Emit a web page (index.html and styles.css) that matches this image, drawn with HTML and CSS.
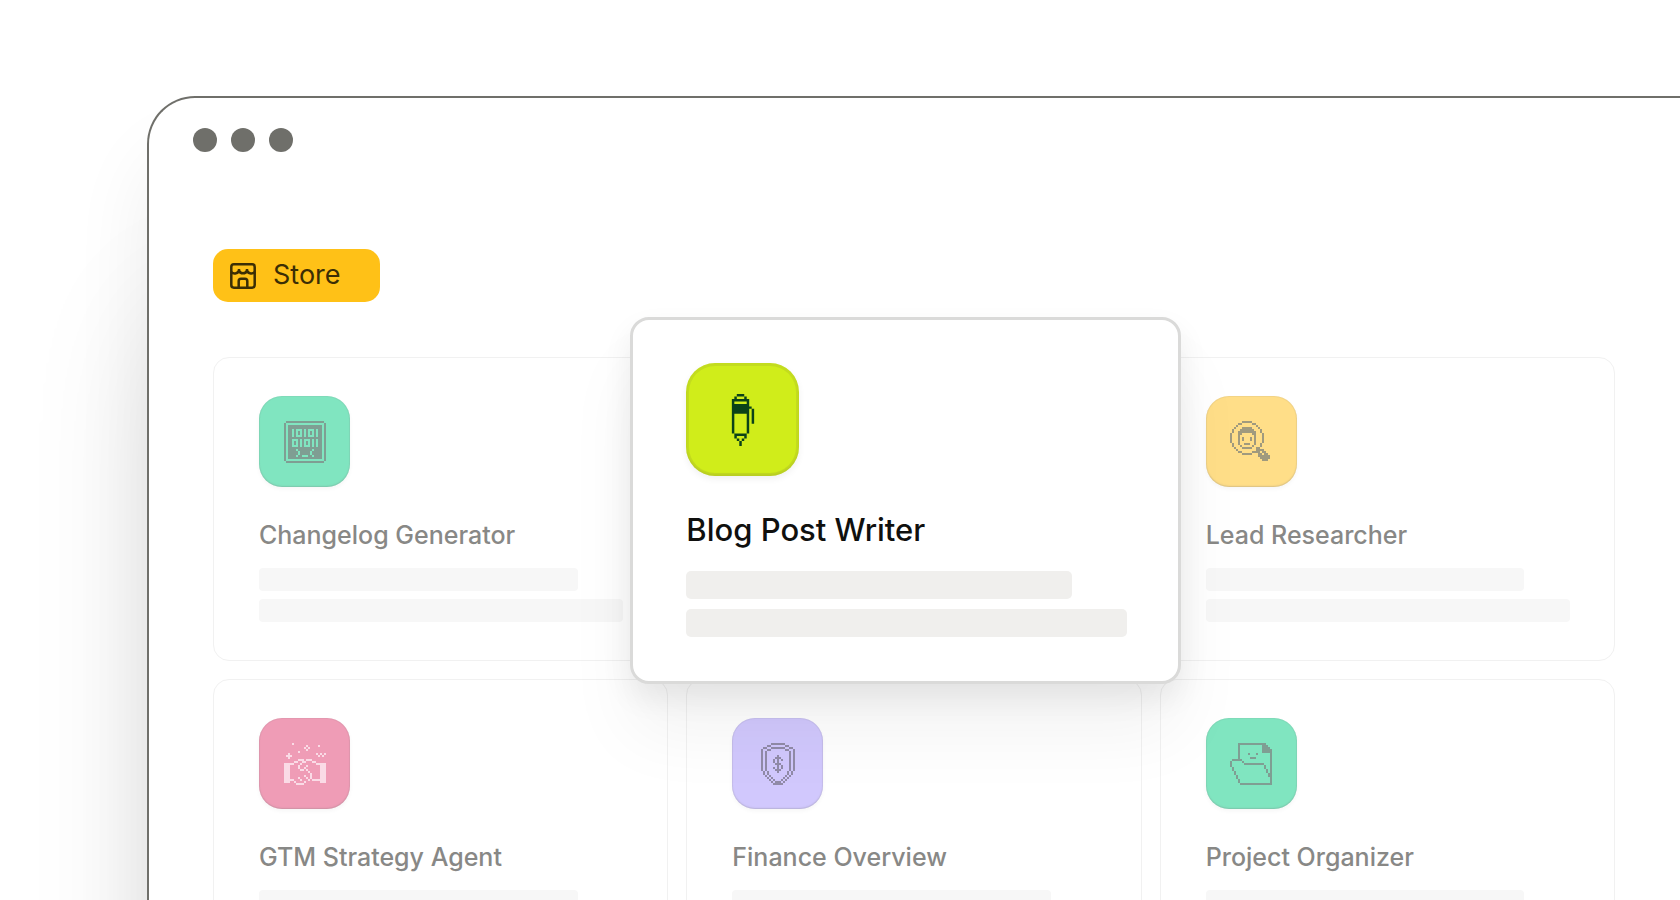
FILE: index.html
```
<!DOCTYPE html>
<html lang="en">
<head>
    <meta charset="UTF-8">
    <meta name="viewport" content="width=device-width, initial-scale=1.0">
    <title>Store</title>
    <link rel="stylesheet" href="styles.css">
</head>
<body>
    <main class="window">
        <div class="dots">
            <span class="dot"></span>
            <span class="dot"></span>
            <span class="dot"></span>
        </div>
        <div class="content">
            <button class="store-button" type="button">
                <svg class="store-icon" viewBox="0 0 26 26" fill="none" stroke="currentColor" stroke-width="2.5" stroke-linejoin="round">
                    <rect x="1.3" y="1.3" width="23.4" height="23.4" rx="2.6"/>
                    <path d="M1.3 9c2 2.200 6 2.200 7.700-1.500 1.500 3.800 6.500 3.800 8 0 1.700 3.700 5.700 3.700 7.700 1.500M9 6v4.500M17 6v4.500M8.700 24.500v-6.500q0-2.300 2.300-2.300h4q2.300 0 2.300 2.300v6.500"/>
                </svg>
                <span>Store</span>
            </button>
            <div class="grid">
                <article class="card">
                    <div class="tile green"><svg class="icon" data-icon="code"></svg></div>
                    <h2 class="name">Changelog Generator</h2>
                    <div class="bar short"></div>
                    <div class="bar"></div>
                </article>
                <div class="slot">
                    <article class="card featured">
                        <div class="tile lime"><svg class="icon" data-icon="pen"></svg></div>
                        <h2 class="name">Blog Post Writer</h2>
                        <div class="bar short"></div>
                        <div class="bar"></div>
                    </article>
                </div>
                <article class="card">
                    <div class="tile yellow"><svg class="icon" data-icon="search"></svg></div>
                    <h2 class="name">Lead Researcher</h2>
                    <div class="bar short"></div>
                    <div class="bar"></div>
                </article>
                <article class="card">
                    <div class="tile pink"><svg class="icon" data-icon="handshake"></svg></div>
                    <h2 class="name">GTM Strategy Agent</h2>
                    <div class="bar short"></div>
                    <div class="bar"></div>
                </article>
                <article class="card">
                    <div class="tile purple"><svg class="icon" data-icon="shield"></svg></div>
                    <h2 class="name">Finance Overview</h2>
                    <div class="bar short"></div>
                    <div class="bar"></div>
                </article>
                <article class="card">
                    <div class="tile green"><svg class="icon" data-icon="folder"></svg></div>
                    <h2 class="name">Project Organizer</h2>
                    <div class="bar short"></div>
                    <div class="bar"></div>
                </article>
            </div>
        </div>
    </main>
    <script src="icons.js"></script>
</body>
</html>
```
FILE: styles.css
```
* {
    box-sizing: border-box;
}
body {
    margin: 0;
    height: 100vh;
    overflow: hidden;
    background: #fff;
    font-family: Inter, "Liberation Sans", sans-serif;
}
.window {
    margin: 96px 0 0 147px;
    padding: 30px 0 200px;
    border: 2px solid #6f6f6a;
    border-right: 0;
    border-radius: 48px 0 0 0;
    background: #fff;
    box-shadow: 0 200px 140px -20px rgba(0, 0, 0, 0.14), 0 60px 80px rgba(0, 0, 0, 0.07);
}
.dots {
    display: flex;
    gap: 14px;
    padding-left: 44px;
}
.dot {
    width: 24px;
    height: 24px;
    border-radius: 50%;
    background: #6f6f6a;
}
.content {
    padding: 97px 65px 0 64px;
}
.store-button {
    display: flex;
    align-items: center;
    gap: 17px;
    width: 167px;
    height: 53px;
    padding: 0 17px;
    border: 0;
    border-radius: 15px;
    background: #ffc117;
    color: #3b2e05;
    font: 400 27px/32px Inter, "Liberation Sans", sans-serif;
    cursor: pointer;
}
.store-button span {
    padding-bottom: 2px;
}
.store-icon {
    width: 26px;
    height: 26px;
}
.grid {
    display: grid;
    grid-template-columns: repeat(3, 1fr);
    gap: 18px;
    margin-top: 55px;
}
.slot {
    position: relative;
}
.card {
    height: 304px;
    padding: 38px 44px 0 45px;
    border: 1px solid #f1f1f1;
    border-radius: 16px;
}
.tile {
    display: grid;
    place-items: center;
    width: 91px;
    height: 91px;
    border-radius: 23px;
    box-shadow: inset 0 0 0 1px rgba(120, 120, 120, 0.08), inset 0 -1px 2px rgba(120, 120, 120, 0.2), 0 2px 4px rgba(0, 0, 0, 0.04);
}
.icon {
    width: 42px;
    height: 42px;
    fill: currentColor;
}
.green {
    background: #80e5c0;
    color: #7f9e93;
}
.yellow {
    background: #ffde88;
    color: #a09a7e;
}
.pink {
    background: #ef9cb6;
    color: #fadbe6;
}
.purple {
    background: #d1c8fd;
    color: #918ba8;
}
.name {
    margin: 32px 0 17px;
    color: #888886;
    font-size: 25px;
    font-weight: 500;
    line-height: 32px;
    white-space: nowrap;
}
.bar {
    height: 23px;
    margin-bottom: 8px;
    border-radius: 4px;
    background: #f7f7f7;
}
.short {
    width: 87.5%;
}
/* card lifted out of its slot */
.featured {
    position: absolute;
    top: -40px;
    left: -56px;
    z-index: 1;
    width: calc(100% + 95px);
    height: 367px;
    padding: 43px 51px 0 53px;
    border: 3px solid #dadad9;
    border-radius: 19px;
    background: #fff;
    box-shadow: 0 50px 70px rgba(0, 0, 0, 0.05), 0 14px 30px rgba(0, 0, 0, 0.07);
}
.featured .tile {
    width: 113px;
    height: 113px;
    border-radius: 29px;
    box-shadow: inset 0 0 0 3px rgba(120, 120, 60, 0.14), inset 0 -2px 2px rgba(120, 120, 60, 0.15), 0 3px 7px rgba(0, 0, 0, 0.06);
}
.featured .icon {
    width: 52px;
    height: 52px;
}
.lime {
    background: #d0ed1a;
    color: #0b4218;
}
.featured .name {
    margin: 34px 0 21px;
    color: #10100e;
    font-size: 31px;
    line-height: 40px;
}
.featured .bar {
    height: 28px;
    margin-bottom: 10px;
    border-radius: 5px;
    background: #f0efed;
}
```
FILE: icons.js
```
// Pixel icons, one character per pixel on a 21 x 21 grid
const ICONS = {
    code: [
        ".###################.",
        "#...................#",
        "#.#################.#",
        "#.#################.#",
        "#.##.#...#.#...#.##.#",
        "#.##.#.#.#.#.#.#.##.#",
        "#.##.#.#.#.#.#.#.##.#",
        "#.##.#...#.#...#.##.#",
        "#.#################.#",
        "#.##...#.#...#.#.##.#",
        "#.##.#.#.#.#.#.#.##.#",
        "#.##.#.#.#.#.#.#.##.#",
        "#.##...#.#...#.#.##.#",
        "#.#################.#",
        "#.####.#######.####.#",
        "#.#####.#####.#####.#",
        "#.#####.#####.#####.#",
        "#.####.##...##.####.#",
        "#.#################.#",
        "#...................#",
        ".###################.",
    ],
    pen: [
        "........###....",
        ".......#...#...",
        "......#######..",
        "......#.....#..",
        "......#######..",
        "......########.",
        "......#######.#",
        "......#######.#",
        "......#.....#.#",
        "......#.....#.#",
        "......#.....#.#",
        "......#.....#.#",
        "......#.....#..",
        "......#.....#..",
        "......#.....#..",
        "......#.....#..",
        ".......#####...",
        ".......#...#...",
        "........#.#....",
        ".........#.....",
        ".........#.....",
    ],
    search: [
        "......#####.........",
        "....##.....##.......",
        "...#.........#......",
        "..#...#####...#.....",
        ".#...#######...#....",
        ".#..#########..#....",
        "#...##.....##...#...",
        "#...#.......#...#...",
        "#...#.#...#.#...#...",
        "#...#.#...#.#...#...",
        "#...#.......#...#...",
        ".#..#..###..#..#....",
        ".#...#.....#...#....",
        "..#...#####..##.....",
        "...#.........####...",
        "....##.....####.##..",
        "......#####...##.##.",
        "..............######",
        "...............#####",
        "................###.",
    ],
    handshake: [
        "....#................",
        "...........#.....#...",
        "..........#.#........",
        "...........#.........",
        ".......#.............",
        "..#.............#.#.#",
        ".###.............#.#.",
        "..#..................",
        ".......###.###.......",
        ".....##..##...##.....",
        "#####...#.......#####",
        "###....#...#......###",
        "###....#..#.......###",
        "###.....##.#......###",
        "###.........#.....###",
        "###..........#....###",
        "###.......#..#....###",
        "###....#...#.#....###",
        "#####...#...#.#######",
        "###..#....#.......###",
        "......####...........",
    ],
    shield: [
        ".......#######.....",
        ".....##.......##...",
        "...##..#######..##.",
        "..#..##.......##..#",
        "..#.#...........#.#",
        "..#.#...........#.#",
        "..#.#.....#.....#.#",
        "..#.#....###....#.#",
        "..#.#...#.#.#...#.#",
        "..#.#...#.#.....#.#",
        "..#.#....###....#.#",
        "..#.#.....#.#...#.#",
        "..#.#...#.#.#...#.#",
        "..#.#....###....#.#",
        "...#.#....#....#.#.",
        "...#.#.........#.#.",
        "....#.#.......#.#..",
        ".....#.#.....#.#...",
        "......#.#...#.#....",
        ".......#.###.#.....",
        "........#####......",
    ],
    folder: [
        "....##############...",
        "....#...........###..",
        "....#...........####.",
        "....#...........#####",
        "....#...........#####",
        "....#....#...#......#",
        "....#...............#",
        "....#.....###.......#",
        ".#####..............#",
        "#.....#.............#",
        "#......##########...#",
        "#................#..#",
        ".#...............#..#",
        ".#................#.#",
        "..#...............#.#",
        "..#................##",
        "...#...............##",
        "...#................#",
        "....#...............#",
        "....#...............#",
        ".....################",
    ],
};

// turn every run of pixels into one strip of the path
function pixelPath(rows) {
    let d = "";
    rows.forEach((row, y) => {
        for (const run of row.matchAll(/#+/g)) {
            const n = run[0].length;
            d += `M${run.index} ${y}h${n}v1h-${n}z`;
        }
    });
    return d;
}

document.querySelectorAll(".icon").forEach(svg => {
    const path = document.createElementNS("http://www.w3.org/2000/svg", "path");
    path.setAttribute("d", pixelPath(ICONS[svg.dataset.icon]));
    svg.setAttribute("viewBox", "0 0 21 21");
    svg.appendChild(path);
});
```
